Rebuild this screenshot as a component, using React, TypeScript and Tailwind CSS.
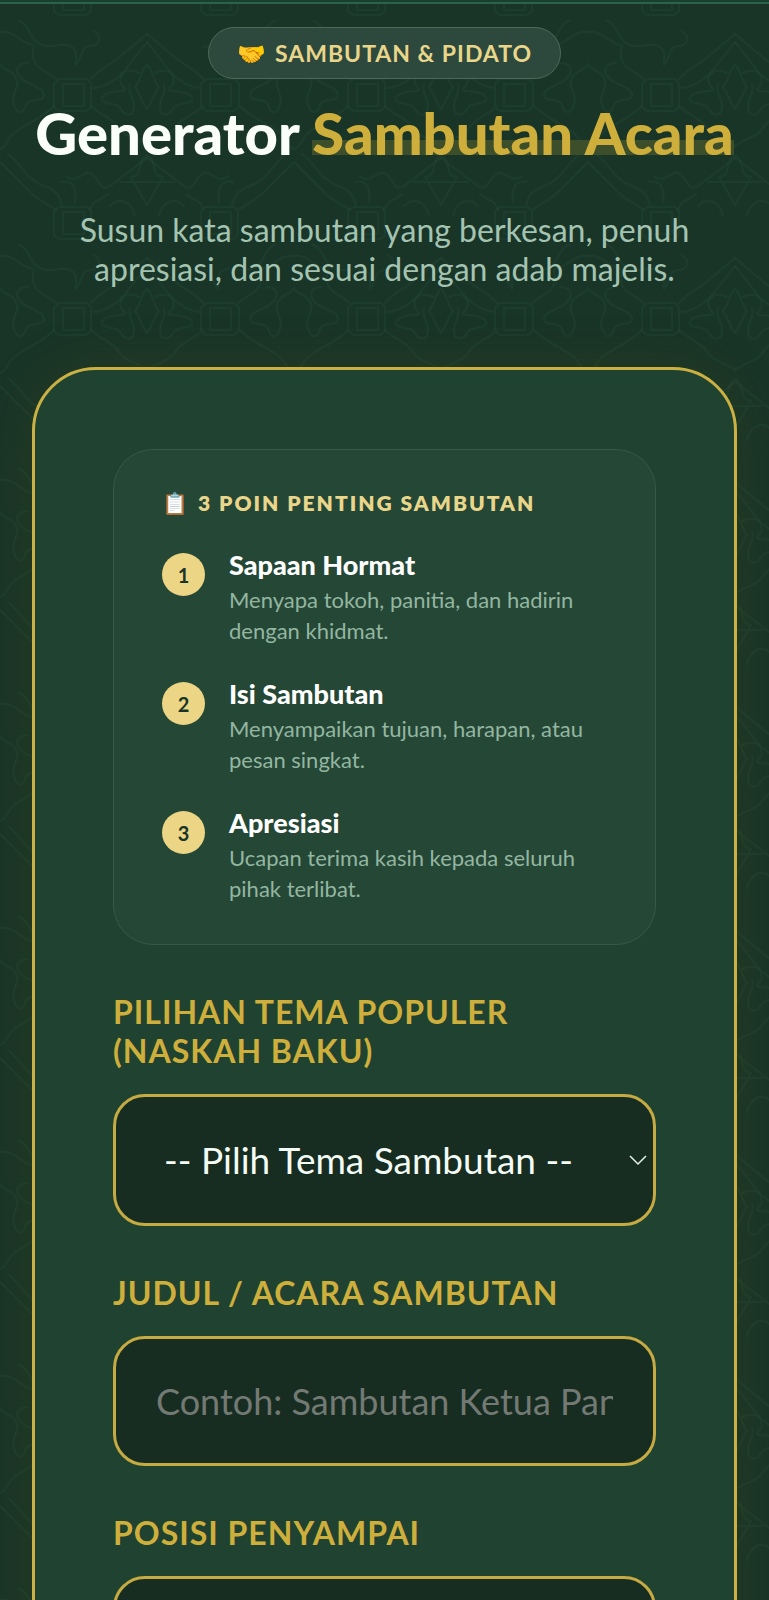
import React from "react";

const points = [
  { title: "Sapaan Hormat", text: "Menyapa tokoh, panitia, dan hadirin dengan khidmat." },
  { title: "Isi Sambutan", text: "Menyampaikan tujuan, harapan, atau pesan singkat." },
  { title: "Apresiasi", text: "Ucapan terima kasih kepada seluruh pihak terlibat." },
];

function Backdrop() {
  return (
    <svg className="pointer-events-none absolute inset-0 h-full w-full" aria-hidden="true">
      <defs>
        <pattern id="arabesque" x="0" y="20" width="294" height="224" patternUnits="userSpaceOnUse">
          <g fill="none" stroke="#234c3c" strokeWidth="2" strokeOpacity="0.3" strokeLinejoin="round" strokeLinecap="round">
            <path d="M63 64h21v22H63zM59 59h28l4 4v24l-5 4H59l-5-4V64z" />
            <path d="M63 192h21v22H63zM59 187h28l4 4v24l-5 4H59l-5-4v-24z" />
            <path d="M56 59C45 50 34 48 33 36S38 27 29 24 12 10 0 12M18 0c14 6 10 20 24 25 10 4 22-4 30 2 7 5 3 12 4 18 8-10 4-18 14-19 10 0 12-10 4-15" />
            <path d="M54 86C42 98 30 102 18 110S8 126 0 129M28 43c-12 0-14 9-6 16 6 6 22 8 22 16s-16 2-18 10-8 10-11 2C8 74 24 66 14 55 8 48 2 50 0 44" />
            <path d="M91 59c8-10 16-12 26-20l30-25M93 68c10 0 24-8 32-18l22-28M91 86c10 10 22 12 28 22s18 10 28 18" />
            <path d="M147 45c8 8 5 14 12 22-6 8-6 14-12 22-6-8-6-14-12-22 7-8 4-14 12-22zM139 53c-16-8-24 6-15 15 6 6-18 0-22 10-2 7 14 4 18 10 5 8 14 10 14-2 0-9-7-14-4-22M155 53c16-8 24 6 15 15-6 6 18 0 22 10 2 7-14 4-18 10-5 8-14 10-14-2 0-9 7-14 4-22" />
            <path d="M0 142l30 30c9 9 18 12 26 18M8 134c14 10 18 26 36 32 12 4 16 10 18 20M61 162c10-2 16 4 14 20M66 156c10 10 18-8 26-2 10 8 8 18 18 12l37-28" />
            <path d="M120 162h54M147 185l-16-28c14-2 4-14 16-22 12 8 2 20 16 22zM108 174c-8 8-14 4-18 16M110 186c10-10 22-4 25 10M186 174c8 8 14 4 18 16M184 186c-10-10-22-4-25 10" />
            <path d="M203 59c-8-10-16-12-26-20l-30-25M201 68c-10 0-24-8-32-18l-22-28M203 86c-10 10-22 12-28 22s-18 10-28 18M210 64h21v22h-21zM206 59h28l5 4v24l-5 4h-28l-5-4V64z" />
            <path d="M238 59c11-9 22-11 23-23s-5-9 4-12 17-14 29-12M276 0c-14 6-10 20-24 25-10 4-22-4-30 2-7 5-3 12-4 18-8-10-4-18-14-19" />
            <path d="M240 86c12 12 24 16 36 24s10 16 18 19M266 43c12 0 14 9 6 16-6 6-22 8-22 16s16 2 18 10 8 10 11 2c7-13-9-21 1-32 6-7 12-5 14-11" />
            <path d="M294 142l-30 30c-9 9-18 12-26 18M286 134c-14 10-18 26-36 32-12 4-16 10-18 20M233 162c-10-2-16 4-14 20M228 156c-10 10-18-8-26-2-10 8-8 18-18 12l-37-28M210 192h21v22h-21zM206 187h28l4 4v24l-5 4h-27l-5-4v-24z" />
          </g>
        </pattern>
      </defs>
      <rect width="100%" height="100%" fill="url(#arabesque)" />
    </svg>
  );
}

export default function App() {
  const label = "block text-[32px] leading-[39px] font-bold tracking-[1px] text-[#cfaf3c] uppercase";
  const field = "mt-6 block w-full rounded-[32px] border-3 border-[#c6aa42] bg-[#172d22] text-[#f4fbf5]";
  return (
    <div className="relative h-screen min-h-screen overflow-hidden bg-[#193528] font-['Lato',sans-serif]">
      <Backdrop />
      <div className="relative border-t-2 border-[#19402f]">
        <div className="h-[2px] bg-[#2b634b]" />
        <header className="flex flex-col items-center px-8 pt-[23px] text-center">
          <div className="flex h-[52px] items-center gap-2 rounded-full border border-[#4b6a5b] bg-[#2d493d] px-7 text-[23px] font-bold tracking-[1px] text-[#e9d68b]">
            <span>🤝</span>
            <span>SAMBUTAN &amp; PIDATO</span>
          </div>
          <h1 className="mt-5 text-[58px] leading-[68px] font-black whitespace-nowrap text-[#fbfffa]">
            Generator{" "}
            <span className="bg-[linear-gradient(to_top,transparent_17%,#3d4e2b_17%,#3d4e2b_39%,transparent_39%)] text-[#cfaf3c]">Sambutan Acara</span>
          </h1>
          <p className="mt-[43px] max-w-[640px] text-[32px] leading-[39px] text-[#a4c4b1]">
            Susun kata sambutan yang berkesan, penuh apresiasi, dan sesuai dengan adab majelis.
          </p>
        </header>
        <main className="mx-8 mt-[79px] rounded-[64px] border-3 border-[#cbb144] bg-[#204331] px-[78px] pt-[79px] pb-20 shadow-[0_0_50px_rgba(80,75,15,0.25)]">
          <section className="rounded-[40px] border border-[#36584a] bg-[#254736] px-12 pt-[35px] pb-10">
            <h2 className="flex items-center gap-2 text-[21px] leading-9 font-extrabold tracking-[2px] text-[#e9d68b]">
              <span>📋</span>
              <span>3 POIN PENTING SAMBUTAN</span>
            </h2>
            <ol className="mt-6 flex flex-col gap-7">
              {points.map((p, i) => (
                <li key={p.title} className="flex gap-6">
                  <span className="mt-2 flex size-[43px] shrink-0 items-center justify-center rounded-full bg-[#ecd584] text-[20px] font-bold text-[#193528]">{i + 1}</span>
                  <div>
                    <h3 className="text-[27px] leading-[39px] font-black text-white">{p.title}</h3>
                    <p className="text-[22px] leading-[31px] text-[#93b6a1]">{p.text}</p>
                  </div>
                </li>
              ))}
            </ol>
          </section>
          <form className="mt-[47px]">
            <label htmlFor="tema" className={label}>Pilihan Tema Populer (Naskah Baku)</label>
            <div className="relative">
              <select id="tema" className={field + " h-[132px] appearance-none px-12 text-[37px]"}>
                <option>-- Pilih Tema Sambutan --</option>
              </select>
              <svg className="pointer-events-none absolute top-[60px] right-2 h-3 w-5" viewBox="0 0 20 12" fill="none" stroke="#e6f0e8" strokeWidth="1.5" aria-hidden="true">
                <path d="m2 2 8 8 8-8" />
              </svg>
            </div>
            <label htmlFor="judul" className={label + " mt-[47px]"}>Judul / Acara Sambutan</label>
            <input id="judul" className={field + " h-[130px] px-10 text-[36px] placeholder:text-[#737973]"} placeholder="Contoh: Sambutan Ketua Panitia" />
            <label htmlFor="posisi" className={label + " mt-[47px]"}>Posisi Penyampai</label>
            <input id="posisi" className={field + " h-[130px] px-10 text-[36px]"} />
          </form>
        </main>
      </div>
    </div>
  );
}
